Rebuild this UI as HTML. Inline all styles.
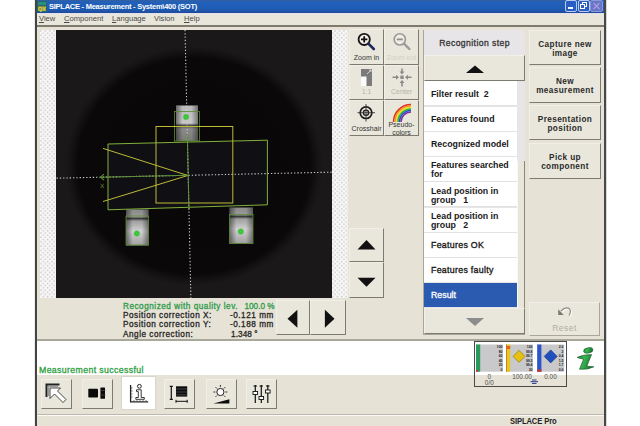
<!DOCTYPE html>
<html><head><meta charset="utf-8">
<style>
*{margin:0;padding:0;box-sizing:border-box}
html,body{width:640px;height:426px;overflow:hidden;background:#fff;font-family:"Liberation Sans",sans-serif}
.a{position:absolute}
#win{left:35px;top:0;width:571px;height:426px;background:#e6e3d6;border-left:2px solid #444;border-right:2px solid #484848;box-shadow:1px 0 0 #d8d8d8,-1px 0 0 #ececec}
#title{left:37px;top:0;width:567px;height:13px;background:linear-gradient(#3a5f9a 0,#2360b8 1.5px,#1f5db6 60%,#1d55aa 11px,#22489a 13px)}
#titletxt{left:49px;top:2px;color:#fff;font-size:7.5px;font-weight:bold;letter-spacing:-0.25px;white-space:nowrap}
#menu{left:37px;top:13px;width:567px;height:12px;background:linear-gradient(#dcdcee 0,#e8e6e0 1px,#e8e6da 2px)}
.mi{top:13.9px;font-size:7.6px;color:#4a4a4a;white-space:nowrap}
#sep{left:37px;top:25px;width:567px;height:1.5px;background:#7e7b6e}
.chk{background-color:#f8f8f8;background-image:radial-gradient(circle at 1px 1px,#cacaca 0,#d8d8d8 0.6px,transparent 1.3px),radial-gradient(circle at 3.2px 3.2px,#cacaca 0,#d8d8d8 0.6px,transparent 1.3px);background-size:4.4px 4.4px}
.btn{background:#e9e7dc;border:1px solid;border-color:#f0efe8 #7d7b70 #7d7b70 #f0efe8}
.tb{font-size:7px;color:#333;text-align:center;white-space:nowrap}
.li{left:424px;width:93px;height:25px;background:#fff;border-bottom:1px solid #e2e2e2;font-size:8.8px;font-weight:bold;color:#1a1a1a;padding-left:7px;line-height:9px;display:flex;align-items:center}
.rb{left:529px;width:72px;padding-top:2px;font-size:8.2px;font-weight:bold;color:#2a2a2a;text-align:center;line-height:9px;letter-spacing:0.4px;display:flex;align-items:center;justify-content:center}
.info{left:123px;font-size:8.2px;font-weight:normal;-webkit-text-stroke:0.3px currentColor;color:#262626;white-space:nowrap;letter-spacing:0.52px}
.tbtn{top:379px;width:31px;height:30px}
</style></head><body>
<div class="a" id="win"></div>
<div class="a" id="title"></div>
<div class="a" id="titletxt">SIPLACE - Measurement - System\400 (SOT)</div>
<div class="a" id="menu"></div>
<div class="a mi" style="left:39px"><u>V</u>iew</div>
<div class="a mi" style="left:64px"><u>C</u>omponent</div>
<div class="a mi" style="left:112px"><u>L</u>anguage</div>
<div class="a mi" style="left:154px">Vision</div>
<div class="a mi" style="left:184px"><u>H</u>elp</div>
<div class="a" id="sep"></div>

<!-- image area -->
<div class="a chk" style="left:40px;top:30px;width:308px;height:268px"></div>
<svg class="a" style="left:56px;top:30px" width="276" height="268" viewBox="56 30 276 268">
 <defs>
  <radialGradient id="vg" gradientUnits="userSpaceOnUse" cx="194" cy="166" r="129" gradientTransform="translate(0 166) scale(1 0.93) translate(0 -166)">
   <stop offset="0" stop-color="#080606"/>
   <stop offset="0.9" stop-color="#0a0808"/>
   <stop offset="0.965" stop-color="#161414"/>
   <stop offset="1" stop-color="#1a1818"/>
  </radialGradient>
  <linearGradient id="ld" x1="0" y1="0" x2="0" y2="1">
   <stop offset="0" stop-color="#8a8a8a"/>
   <stop offset="0.2" stop-color="#9a9a9a"/>
   <stop offset="0.25" stop-color="#3a3a3a"/>
   <stop offset="0.32" stop-color="#a0a0a0"/>
   <stop offset="0.6" stop-color="#d0d0d0"/>
   <stop offset="1" stop-color="#a0a0a0"/>
  </linearGradient>
  <linearGradient id="lh" x1="0" y1="0" x2="1" y2="0">
   <stop offset="0" stop-color="#000" stop-opacity="0.45"/>
   <stop offset="0.3" stop-color="#000" stop-opacity="0"/>
   <stop offset="0.7" stop-color="#000" stop-opacity="0"/>
   <stop offset="1" stop-color="#000" stop-opacity="0.4"/>
  </linearGradient>
  <radialGradient id="gd"><stop offset="0" stop-color="#40d040"/><stop offset="0.6" stop-color="#38c038"/><stop offset="1" stop-color="#38c038" stop-opacity="0"/></radialGradient>
  <linearGradient id="ldt" x1="0" y1="0" x2="0" y2="1">
   <stop offset="0" stop-color="#b8b8b8"/>
   <stop offset="0.5" stop-color="#c8c8c8"/>
   <stop offset="0.56" stop-color="#4a4a4a"/>
   <stop offset="0.66" stop-color="#8a8a8a"/>
   <stop offset="1" stop-color="#7a7a7a"/>
  </linearGradient>
 </defs>
 <rect x="56" y="30" width="276" height="268" fill="url(#vg)"/>
 <polygon points="108,144 267.4,140.2 267.4,204.8 108,209.8" fill="#100f13"/>
 <rect x="176" y="105.5" width="22" height="35.5" fill="url(#ldt)"/>
 <rect x="176" y="105.5" width="22" height="35.5" fill="url(#lh)"/>
 <rect x="126" y="209.5" width="22.5" height="36" fill="url(#ld)"/>
 <rect x="126" y="209.5" width="22.5" height="36" fill="url(#lh)"/>
 <rect x="229.5" y="207.5" width="23.5" height="36" fill="url(#ld)"/>
 <rect x="229.5" y="207.5" width="23.5" height="36" fill="url(#lh)"/>
 <rect x="174.5" y="111.5" width="25" height="29.5" fill="none" stroke="#5a8a30" stroke-width="0.8"/>
 <rect x="126" y="216" width="22.5" height="29" fill="none" stroke="#5a8a30" stroke-width="0.8"/>
 <rect x="229.5" y="214.5" width="23.5" height="29" fill="none" stroke="#5a8a30" stroke-width="0.8"/>
 <g transform="rotate(-1.25 188.2 175.3)">
 <line x1="188.2" y1="20" x2="188.2" y2="310" stroke="#cfcfcf" stroke-width="1.1" stroke-dasharray="1.3 2"/>
 <line x1="40" y1="175.3" x2="340" y2="175.3" stroke="#cfcfcf" stroke-width="1.1" stroke-dasharray="1.3 2"/>
 </g>
 <circle cx="186" cy="117" r="3.6" fill="url(#gd)"/>
 <circle cx="136.8" cy="233.5" r="3.6" fill="url(#gd)"/>
 <circle cx="240.8" cy="231.5" r="3.6" fill="url(#gd)"/>
 <polygon points="108,144 267.4,140.2 267.4,204.8 108,209.8" fill="none" stroke="#82b03c" stroke-width="1"/>
 <rect x="156" y="126.5" width="76.8" height="76.5" fill="none" stroke="#bcbc36" stroke-width="1"/>
 <polyline points="103,148.4 187.8,175.5 103,201.5" fill="none" stroke="#bcbc36" stroke-width="1"/>
 <g transform="rotate(-1.25 188.2 175.3)">
 <line x1="100" y1="175.3" x2="188.2" y2="175.3" stroke="#5e9236" stroke-width="1"/>
 <polyline points="104,172.3 100.5,175.3 104,178.3" fill="none" stroke="#5e9236" stroke-width="1"/>
 <text x="100" y="186" font-family="Liberation Sans" font-size="6" fill="#6a9a3a">X</text>
 <line x1="188.2" y1="134" x2="188.2" y2="210" stroke="#5e9236" stroke-width="1"/>
 </g>
</svg>

<!-- tool buttons -->
<div class="a btn" style="left:349px;top:29px;width:35px;height:35.5px"></div>
<div class="a btn" style="left:384px;top:29px;width:35px;height:35.5px"></div>
<div class="a btn" style="left:349px;top:64.5px;width:35px;height:35.5px"></div>
<div class="a btn" style="left:384px;top:64.5px;width:35px;height:35.5px"></div>
<div class="a btn" style="left:349px;top:100px;width:35px;height:35.5px"></div>
<div class="a btn" style="left:384px;top:100px;width:35px;height:35.5px"></div>
<div class="a tb" style="left:349px;top:53.5px;width:35px">Zoom in</div>
<div class="a tb" style="left:384px;top:53.5px;width:35px;color:#d2cfc4">Zoom out</div>
<div class="a tb" style="left:349px;top:88px;width:35px;color:#b5b3a8">1:1</div>
<div class="a tb" style="left:384px;top:88px;width:35px;color:#b5b3a8">Center</div>
<div class="a tb" style="left:349px;top:124.5px;width:35px">Crosshair</div>
<div class="a tb" style="left:384px;top:121px;width:35px;line-height:8px">Pseudo-<br>colors</div>

<!-- up/down -->
<div class="a btn" style="left:349px;top:228px;width:35px;height:34px"></div>
<div class="a btn" style="left:349px;top:262px;width:35px;height:36px"></div>
<!-- nav -->
<div class="a btn" style="left:276px;top:300px;width:34px;height:35px"></div>
<div class="a btn" style="left:310px;top:300px;width:36px;height:35px"></div>

<!-- info -->
<div class="a info" style="top:301.5px;color:#2e9a4a">Recognized with quality lev.</div>
<div class="a info" style="top:301.5px;left:244.5px;color:#2e9a4a;letter-spacing:0">100.0 %</div>
<div class="a info" style="top:310.5px">Position correction X:</div>
<div class="a info" style="top:310.5px;left:230px">-0.121 mm</div>
<div class="a info" style="top:320px">Position correction Y:</div>
<div class="a info" style="top:320px;left:230px">-0.188 mm</div>
<div class="a info" style="top:329.5px">Angle correction:</div>
<div class="a info" style="top:329.5px;left:231px;letter-spacing:0.1px">1.348 °</div>

<!-- recognition list -->
<div class="a" style="left:423px;top:30px;width:102px;height:305px;background:#e7e5e7;border-left:1px solid #a8a698;border-bottom:1px solid #a8a698"></div>
<div class="a" style="left:424px;top:38px;width:101px;font-size:8.6px;font-weight:normal;-webkit-text-stroke:0.3px #333;color:#333;text-align:center;letter-spacing:0.42px">Recognition step</div>
<div class="a btn" style="left:424px;top:55px;width:101px;height:26px"></div>
<div class="a li" style="top:81px;padding-top:2px">Filter result&nbsp; 2</div>
<div class="a li" style="top:107px">Features found</div>
<div class="a li" style="top:132px">Recognized model</div>
<div class="a li" style="top:157px;padding-top:2px">Features searched<br>for</div>
<div class="a li" style="top:182px;padding-top:3px">Lead position in<br>group&nbsp;&nbsp; 1</div>
<div class="a li" style="top:208px;padding-top:2px">Lead position in<br>group&nbsp;&nbsp; 2</div>
<div class="a li" style="top:233px;font-weight:normal;-webkit-text-stroke:0.35px #1a1a1a;letter-spacing:0.3px">Features OK</div>
<div class="a li" style="top:258px;font-weight:normal;-webkit-text-stroke:0.35px #1a1a1a;letter-spacing:0.3px">Features faulty</div>
<div class="a li" style="top:283px;background:#2b5bb0;color:#fff;font-weight:normal;-webkit-text-stroke:0.3px #fff">Result</div>
<div class="a" style="left:517px;top:161px;width:7.5px;height:147px;background:#e8e6da;border-left:1px solid #fafaf6;border-right:1px solid #8a887c"></div>
<div class="a btn" style="left:424px;top:308px;width:101px;height:26px"></div>

<!-- right buttons -->
<div class="a btn rb" style="top:30px;height:35px">Capture new<br>image</div>
<div class="a btn rb" style="top:67px;height:36px">New<br>measurement</div>
<div class="a btn rb" style="top:105px;height:35px">Presentation<br>position</div>
<div class="a btn rb" style="top:143px;height:36px">Pick up<br>component</div>
<div class="a btn" style="left:529px;top:302px;width:71px;height:34px;border-color:#f0efe8 #a9a79b #a9a79b #f0efe8"></div>
<div class="a" style="left:529px;top:323px;width:71px;font-size:8.5px;color:#b0aea3;text-align:center;letter-spacing:0.5px">Reset</div>

<!-- bottom shadow & white area -->
<div class="a" style="left:37px;top:339px;width:567px;height:2px;background:#a9a69a"></div>
<div class="a" style="left:37px;top:341px;width:567px;height:34px;background:#fff"></div>
<div class="a" style="left:39px;top:364.7px;font-size:8.7px;font-weight:normal;-webkit-text-stroke:0.3px #2a9e40;color:#2a9e40;white-space:nowrap;letter-spacing:0.4px">Measurement successful</div>

<!-- toolbar -->
<div class="a btn tbtn" style="left:41px"></div>
<div class="a btn tbtn" style="left:82px"></div>
<div class="a" style="left:121px;top:376px;width:35px;height:34px;background:#fff;border:1px solid #d8d6cc"></div>
<div class="a btn tbtn" style="left:164px"></div>
<div class="a btn tbtn" style="left:206px"></div>
<div class="a btn tbtn" style="left:246px"></div>

<!-- status bar -->
<div class="a" style="left:37px;top:413.5px;width:567px;height:1.5px;background:#bcb9ac"></div>
<div class="a" style="left:37px;top:415px;width:567px;height:1px;background:#fbfaf4"></div>
<div class="a" style="left:510px;top:416px;font-size:8.6px;font-weight:bold;color:#222;white-space:nowrap;letter-spacing:-0.1px;transform:scaleX(0.88);transform-origin:0 0">SIPLACE Pro</div>

<!-- icon overlay -->
<svg class="a" style="left:0;top:0" width="640" height="426" viewBox="0 0 640 426">
 <!-- title buttons -->
 <rect x="565.5" y="0.5" width="11" height="11" rx="1.5" fill="#2a5ec4" stroke="#b8caf0" stroke-width="1"/>
 <rect x="568" y="7" width="5" height="2" fill="#fff"/>
 <rect x="578.5" y="0.5" width="11" height="11" rx="1.5" fill="#2a5ec4" stroke="#b8caf0" stroke-width="1"/>
 <rect x="582.5" y="2.5" width="4" height="4" fill="none" stroke="#fff" stroke-width="1"/>
 <rect x="580.5" y="4.5" width="4" height="4" fill="#2a5ec4" stroke="#fff" stroke-width="1"/>
 <rect x="590.5" y="0.5" width="12" height="11" rx="1.5" fill="#6676c8" stroke="#8a98d8" stroke-width="1"/>
 <path d="M593.5,3 L599.5,9 M599.5,3 L593.5,9" stroke="#b49ade" stroke-width="1.2"/>
 <!-- app icon -->
 <rect x="37" y="1" width="10" height="11" fill="#1a6a6e"/>
 <rect x="38" y="2" width="8" height="3" fill="#2f8a80"/>
 <rect x="38" y="6" width="8" height="5" fill="#8a8a38"/>
 <text x="38" y="11" font-family="Liberation Sans" font-weight="bold" font-size="5.5" fill="#d8d860">QX</text>
 <!-- zoom in -->
 <circle cx="364.2" cy="39.4" r="5.6" fill="#f4f2ea" stroke="#151515" stroke-width="1.8"/>
 <path d="M361,39.4 H367.4 M364.2,36.2 V42.6" stroke="#111" stroke-width="1.8"/>
 <path d="M368.4,43.6 L373.8,49" stroke="#1c2a5a" stroke-width="2.6" stroke-linecap="round"/>
 <!-- zoom out -->
 <circle cx="399.8" cy="39.4" r="5.6" fill="#eeece4" stroke="#9a9a96" stroke-width="1.6"/>
 <path d="M396.8,39.4 H402.8" stroke="#8e8e8a" stroke-width="1.8"/>
 <path d="M404,43.6 L409.4,49" stroke="#9a9a9a" stroke-width="2.4" stroke-linecap="round"/>
 <!-- 1:1 -->
 <rect x="361" y="69" width="11" height="17" fill="#7b7b7b"/>
 <rect x="361" y="76.5" width="5.5" height="9.5" fill="#fbfbfb"/>
 <path d="M367,74 L371,70 M369,70 H371 V72" stroke="#e8e8e8" stroke-width="0.8" fill="none"/>
 <!-- center -->
 <g fill="#8a8a8a">
  <rect x="400.3" y="75.6" width="3.4" height="3.4"/>
  <path d="M402,74.5 L399.5,71.5 H401.2 V68.5 H402.8 V71.5 H404.5 Z"/>
  <path d="M402,80 L399.5,83 H401.2 V86.5 H402.8 V83 H404.5 Z"/>
  <path d="M399,77.3 L396,74.8 V76.5 H392.5 V78.1 H396 V79.8 Z"/>
  <path d="M405,77.3 L408,74.8 V76.5 H411.5 V78.1 H408 V79.8 Z"/>
 </g>
 <!-- crosshair -->
 <circle cx="366" cy="112.7" r="5.8" fill="none" stroke="#1a1a1a" stroke-width="1.7"/>
 <circle cx="366" cy="112.7" r="2.6" fill="none" stroke="#1a1a1a" stroke-width="1.3"/>
 <path d="M366,104 V121.5 M357.5,112.7 H375" stroke="#333" stroke-width="0.9"/>
 <!-- rainbow -->
 <g fill="none" stroke-width="1.5">
  <path d="M393.5,122 A17.5,17.5 0 0 1 411,104.5" stroke="#e03020"/>
  <path d="M395,122 A16,16 0 0 1 411,106" stroke="#f09020"/>
  <path d="M396.5,122 A14.5,14.5 0 0 1 411,107.5" stroke="#f0e020"/>
  <path d="M398,122 A13,13 0 0 1 411,109" stroke="#30b030"/>
  <path d="M399.5,122 A11.5,11.5 0 0 1 411,110.5" stroke="#2050d0"/>
  <path d="M401,122 A10,10 0 0 1 411,112" stroke="#8030a0"/>
 </g>
 <!-- list up/down triangles -->
 <path d="M466,73 L484,73 L475,65.5 Z" fill="#111"/>
 <path d="M466,318 L484,318 L475,326 Z" fill="#8c8c8c"/>
 <!-- up/down buttons -->
 <path d="M357.5,249.5 L375.5,249.5 L366.5,240 Z" fill="#111"/>
 <path d="M357.5,277.8 L375.5,277.8 L366.5,286.7 Z" fill="#111"/>
 <!-- nav -->
 <path d="M297.4,309.7 L297.4,327.7 L287.5,318.7 Z" fill="#111"/>
 <path d="M324.9,309.7 L324.9,327.7 L334.5,318.7 Z" fill="#111"/>
 <!-- reset -->
 <path d="M562,312 Q566.5,307 570.5,309.8 Q572.5,312.5 570,316.5" fill="none" stroke="#fbfaf4" stroke-width="1.3"/>
 <path d="M561,311 Q565.5,306 569.5,308.8 Q571.5,311.5 569,315.5" fill="none" stroke="#8e8d86" stroke-width="1.2"/>
 <path d="M558.2,309.2 L558.2,315 L563.8,315 Z" fill="#7a7972"/>
 <!-- toolbar icons -->
 <path d="M46.5,397 V384.5 H59.5" fill="none" stroke="#222" stroke-width="2"/>
 <path d="M48.5,396 V386.5 H58" fill="none" stroke="#9a9a9a" stroke-width="1.2"/>
 <path d="M50,388 L60.5,388 L57.5,391 L66,399.5 L63,402.5 L54.5,394 L50,398.5 Z" fill="#fff" stroke="#333" stroke-width="0.9" stroke-linejoin="round"/>
 <rect x="88.3" y="388.8" width="9.7" height="8.8" rx="0.8" fill="#0a0a0a"/>
 <rect x="100.4" y="387.4" width="4.6" height="11.4" rx="0.5" fill="#0a0a0a"/>
 <path d="M100.6,390.5 H105.6 M100.6,395 H105.6" stroke="#555" stroke-width="0.6"/>
 <!-- info ruler icon -->
 <path d="M130.6,385 V401.8 H148.2" fill="none" stroke="#222" stroke-width="1.3"/>
 <path d="M131,388 H132.6 M131,391 H132.6 M131,394 H132.6 M131,397 H132.6 M134,401.5 V400 M137,401.5 V400 M140,401.5 V400 M143,401.5 V400 M146,401.5 V400" stroke="#444" stroke-width="0.7"/>
 <circle cx="139.4" cy="386.3" r="1.9" fill="#fff" stroke="#222" stroke-width="1"/>
 <path d="M136.5,389.8 H141.2 V397.5 H144.3 V399.3 H135.8 V397.5 H138.3 V391.6 H136.5 Z" fill="#fff" stroke="#222" stroke-width="0.9"/>
 <!-- btn4 -->
 <path d="M171.3,386.3 V399.4 M169.8,386.3 H172.8 M169.8,399.4 H172.8" stroke="#111" stroke-width="1.2"/>
 <rect x="176" y="386.3" width="11.2" height="10.3" fill="#0c0c0c"/>
 <path d="M176,389 H187.2 M176,392 H187.2 M176,394.8 H187.2" stroke="#777" stroke-width="0.5"/>
 <path d="M176,401.3 H187.2 M176,399.8 V402.8 M187.2,399.8 V402.8" stroke="#111" stroke-width="1"/>
 <!-- btn5 sun -->
 <g stroke="#222" stroke-width="1">
  <path d="M220.4,385 V386.8 M213.5,392 H215.3 M225.5,392 H227.3 M215.6,387.2 L216.9,388.5 M225.2,387.2 L223.9,388.5 M215.6,396.8 L216.9,395.5 M225.2,396.8 L223.9,395.5"/>
 </g>
 <circle cx="220.4" cy="392" r="3.6" fill="#fff" stroke="#222" stroke-width="1"/>
 <path d="M213.4,403.5 L229.4,399.2 V403.5 Z" fill="#0c0c0c"/>
 <!-- btn6 sliders -->
 <g stroke="#111">
  <path d="M255.3,385 V403 M261.3,385 V403 M267.8,385 V403" stroke-width="1.2"/>
  <path d="M253.5,386 H257 M259.5,386 H263 M266,386 H269.5" stroke-width="1"/>
 </g>
 <rect x="253" y="391.5" width="4.6" height="3" fill="#fff" stroke="#111" stroke-width="0.9"/>
 <rect x="259" y="396.5" width="4.6" height="3" fill="#fff" stroke="#111" stroke-width="0.9"/>
 <rect x="265.5" y="390" width="4.6" height="3" fill="#fff" stroke="#111" stroke-width="0.9"/>
 <!-- indicator box -->
 <rect x="474.5" y="341.5" width="92" height="45" fill="none" stroke="#4a4a48" stroke-width="1"/>
 <rect x="476" y="344.5" width="27" height="27.2" fill="#c9c9cb"/>
 <rect x="476" y="344.5" width="4.2" height="27.2" fill="#2a9a5a"/>
 <rect x="476" y="370" width="2" height="1.7" fill="#d03030"/>
 <rect x="506" y="344.5" width="27" height="27.2" fill="#c9c9cb"/>
 <rect x="506" y="344.5" width="4.2" height="27.2" fill="#e8c820"/>
 <rect x="506" y="344.5" width="1" height="27.2" fill="#d08020"/>
 <rect x="506" y="346" width="4.2" height="3" fill="#e06020"/>
 <rect x="537.2" y="344.5" width="27" height="27.2" fill="#c9c9cb"/>
 <rect x="537.2" y="344.5" width="4.2" height="27.2" fill="#2b55c8"/>
 <rect x="537.2" y="369.5" width="4.2" height="2.2" fill="#d03030"/>
 <path d="M519,350.3 L525,356.4 L519,362.4 L513,356.4 Z" fill="#e8c010" stroke="#806a10" stroke-width="0.6"/>
 <path d="M550.7,349.9 L557.2,356.4 L550.7,362.9 L544.2,356.4 Z" fill="#2050c0" stroke="#102a70" stroke-width="0.6"/>
 <g font-family="Liberation Sans" font-size="3.4" font-weight="bold" fill="#1a1a1a" text-anchor="end">
  <text x="502.5" y="348">100</text><text x="502.5" y="352.5">80</text><text x="502.5" y="357">60</text><text x="502.5" y="361.5">40</text><text x="502.5" y="366">20</text><text x="502.5" y="370.5">0</text>
  <text x="532.5" y="348">100</text><text x="532.5" y="352.5">99.8</text><text x="532.5" y="357">99.7</text><text x="532.5" y="361.5">99.5</text><text x="532.5" y="366">99.4</text><text x="532.5" y="370.5">30</text>
  <text x="563.5" y="348">2.0</text><text x="563.5" y="352.5">2</text><text x="563.5" y="357">0.4</text><text x="563.5" y="361.5">1.5</text><text x="563.5" y="366">1.7</text><text x="563.5" y="370.5">0.0</text>
 </g>
 <g font-family="Liberation Sans" font-size="6.4" fill="#4a4a4a" text-anchor="middle">
  <text x="489.3" y="378.5">0</text>
  <text x="489.3" y="385">0/0</text>
  <text x="522" y="378.5">100.00</text>
  <text x="550.5" y="378.5">0.00</text>
 </g>
 <path d="M530.5,381.7 H538 M532,380 H536.5 M532,383.4 H536.5" stroke="#2a3a8a" stroke-width="1"/>
 <!-- green i -->
 <defs><linearGradient id="ig" x1="0" y1="0" x2="1" y2="0.3"><stop offset="0" stop-color="#1e8a36"/><stop offset="0.45" stop-color="#3cb454"/><stop offset="1" stop-color="#177a2c"/></linearGradient></defs>
 <ellipse cx="588.3" cy="350.4" rx="4.7" ry="2.6" transform="rotate(-12 588.3 350.4)" fill="url(#ig)" stroke="#1a5a2a" stroke-width="0.6"/>
 <path d="M577.2,357.4 Q583,354.6 591.5,354.6 L586.8,366.2 Q590,366.6 593.8,366.8 Q588,370 579.5,369.2 L583.6,359.2 Q580,358.4 577.2,357.4 Z" fill="url(#ig)" stroke="#1a5a2a" stroke-width="0.7"/>
</svg>
</body></html>
